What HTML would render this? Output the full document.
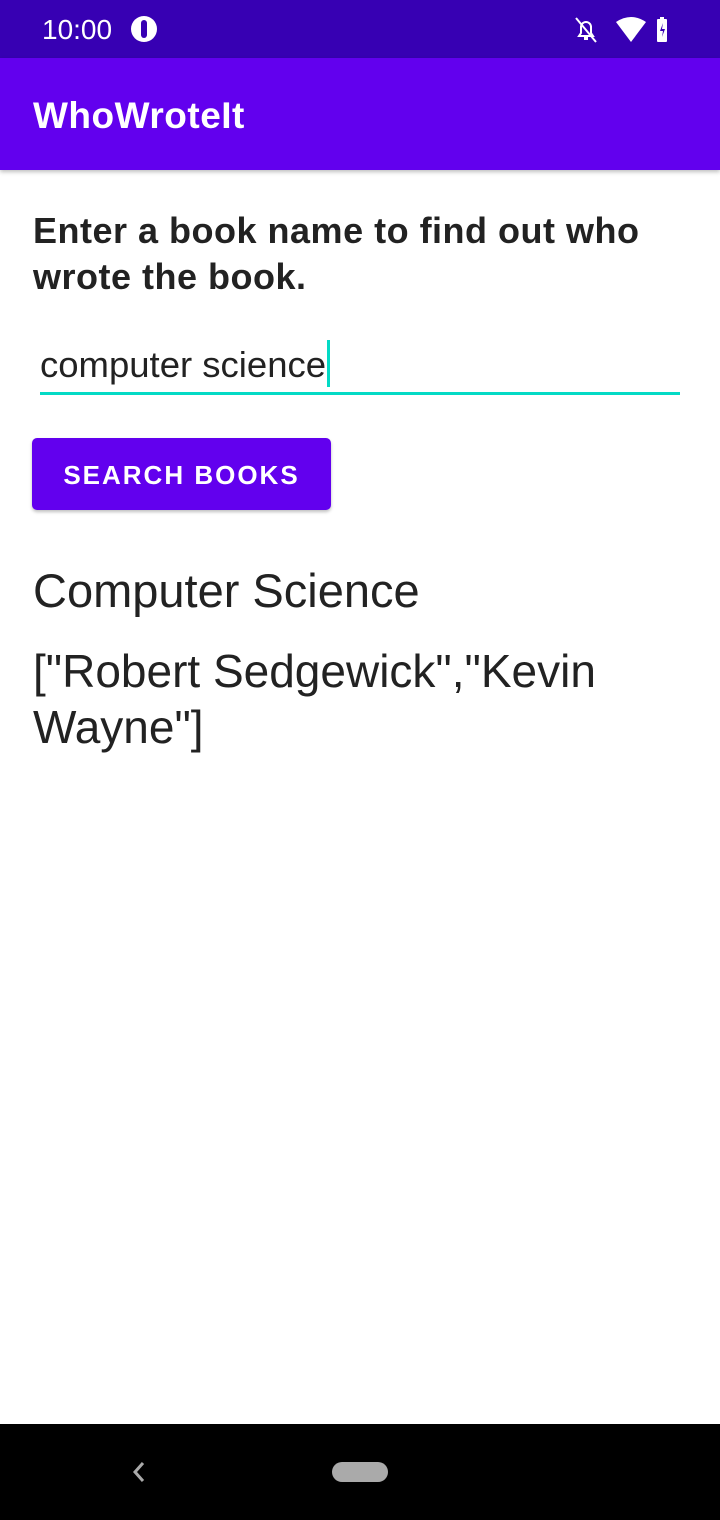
<!DOCTYPE html>
<html><head><style>
body{margin:0;width:720px;height:1520px;position:relative;background:#fff;font-family:"Liberation Sans",sans-serif;overflow:hidden}
.abs{position:absolute}
</style></head><body>
<div class="abs" style="left:0;top:0;width:720px;height:58px;background:#3700b3"></div>
<div class="abs" style="left:42px;top:14px;color:#fff;font-size:28px">10:00</div>
<div class="abs" style="left:131px;top:16px;width:26px;height:26px;border-radius:50%;background:#fff"></div>
<div class="abs" style="left:141px;top:20px;width:6px;height:18px;background:#3700b3;border-radius:3px"></div>
<svg class="abs" style="left:570px;top:14px" width="110" height="32" viewBox="0 0 110 32">
<path d="M9 22h14l-2-3v-6a5 5 0 0 0-10 0v6z" fill="none" stroke="#fff" stroke-width="2"/><path d="M6 4l20 24" stroke="#fff" stroke-width="2"/><rect x="14" y="23" width="4" height="3" fill="#fff"/>
<path d="M46 8q15-10 30 0l-15 20z" fill="#fff"/>
<rect x="87" y="5" width="10" height="23" rx="1" fill="#fff"/><rect x="90" y="3" width="4" height="3" fill="#fff"/><path d="M93 9l-3 8h3l-1 6 3-8h-3z" fill="#3700b3"/>
</svg>
<div class="abs" style="left:0;top:58px;width:720px;height:112px;background:#6200ee;box-shadow:0 2px 4px rgba(0,0,0,.25)"></div>
<div class="abs" style="left:33px;top:95px;color:#fff;font-size:37px;font-weight:bold;letter-spacing:0.5px">WhoWroteIt</div>
<div class="abs" style="left:33px;top:208px;color:#222;font-size:36px;font-weight:bold;line-height:46px;width:680px;letter-spacing:0.5px">Enter a book name to find out who wrote the book.</div>
<div class="abs" style="left:40px;top:344px;color:#222;font-size:36.5px">computer science</div>
<div class="abs" style="left:327px;top:340px;width:3px;height:47px;background:#03dac5"></div>
<div class="abs" style="left:40px;top:392px;width:640px;height:3px;background:#03dac5"></div>
<div class="abs" style="left:32px;top:438px;width:299px;height:72px;background:#6200ee;border-radius:5px;box-shadow:0 2px 3px rgba(0,0,0,.25);color:#fff;font-size:26px;font-weight:bold;letter-spacing:2px;text-align:center;line-height:74px">SEARCH BOOKS</div>
<div class="abs" style="left:33px;top:563px;color:#222;font-size:47px">Computer Science</div>
<div class="abs" style="left:33px;top:643px;color:#222;font-size:46px;line-height:56px;width:670px">["Robert Sedgewick","Kevin Wayne"]</div>
<div class="abs" style="left:0;top:1424px;width:720px;height:96px;background:#000"></div>
<svg class="abs" style="left:128px;top:1460px" width="20" height="24"><path d="M15 3L7 12l8 9" fill="none" stroke="#aaa" stroke-width="3"/></svg>
<div class="abs" style="left:332px;top:1462px;width:56px;height:20px;border-radius:10px;background:#aaa"></div>
</body></html>
